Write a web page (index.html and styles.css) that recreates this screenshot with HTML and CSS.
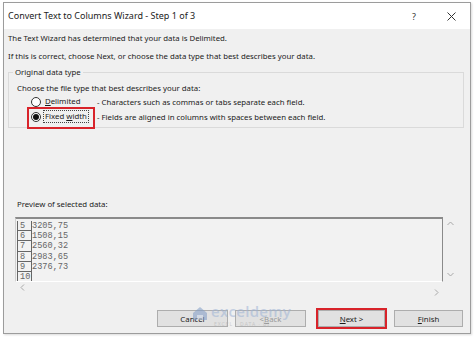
FILE: index.html
```html
<!DOCTYPE html>
<html>
<head>
<meta charset="utf-8">
<link rel="stylesheet" href="styles.css">
</head>
<body>
<div class="dialog">
  <div class="titlebar">
    <span class="title">Convert Text to Columns Wizard - Step 1 of 3</span>
    <span class="help">?</span>
    <svg class="close" width="9" height="9" viewBox="0 0 9 9"><path d="M0.5 0.5L8.5 8.5M8.5 0.5L0.5 8.5" stroke="#333" stroke-width="1"/></svg>
  </div>
  <div class="content">
    <p class="line first">The Text Wizard has determined that your data is Delimited.</p>
    <p class="line second">If this is correct, choose Next, or choose the data type that best describes your data.</p>
    <fieldset class="group">
      <legend>Original data type</legend>
      <p class="line choose">Choose the file type that best describes your data:</p>
      <div class="opt">
        <span class="pick"><span class="radio"></span><span class="lbl"><u>D</u>elimited</span></span>
        <span class="desc">- Characters such as commas or tabs separate each field.</span>
      </div>
      <div class="opt">
        <span class="pick hl"><span class="radio on"></span><span class="lbl focus">Fixed <u>w</u>idth</span></span>
        <span class="desc">- Fields are aligned in columns with spaces between each field.</span>
      </div>
    </fieldset>
    <p class="line plabel">Preview of selected data:</p>
    <div class="preview">
      <div class="box">
        <div class="row"><span class="num">5</span><span class="val">3205,75</span></div>
        <div class="row"><span class="num">6</span><span class="val">1508,15</span></div>
        <div class="row"><span class="num">7</span><span class="val">2560,32</span></div>
        <div class="row"><span class="num">8</span><span class="val">2983,65</span></div>
        <div class="row"><span class="num">9</span><span class="val">2376,73</span></div>
        <div class="row"><span class="num">10</span><span class="val"></span></div>
      </div>
      <div class="vscroll">
        <svg width="7" height="5" viewBox="0 0 7 5"><path d="M0.5 4L3.5 1L6.5 4" fill="none" stroke="#a8a8a8" stroke-width="1"/></svg>
        <svg width="7" height="5" viewBox="0 0 7 5"><path d="M0.5 1L3.5 4L6.5 1" fill="none" stroke="#a8a8a8" stroke-width="1"/></svg>
      </div>
      <div class="hscroll">
        <svg class="hl-left" width="5" height="7" viewBox="0 0 5 7"><path d="M4 0.5L1 3.5L4 6.5" fill="none" stroke="#a8a8a8" stroke-width="1"/></svg>
        <svg class="hl-right" width="5" height="7" viewBox="0 0 5 7"><path d="M1 0.5L4 3.5L1 6.5" fill="none" stroke="#a8a8a8" stroke-width="1"/></svg>
      </div>
    </div>
    <div class="buttons">
      <span class="btn cancel">Cancel</span>
      <span class="btn back">&lt; <u>B</u>ack</span>
      <span class="btn next"><u>N</u>ext &gt;</span>
      <span class="btn finish"><u>F</u>inish</span>
      <div class="watermark">
        <svg class="wm-icon" width="16" height="15" viewBox="0 0 16 15"><path d="M1 7L8 1L15 7V14H1Z" fill="#7f9cc6"/><path d="M5 14V9H11V14" fill="#c9d6ea"/></svg>
        <span class="wm-text">exceldemy</span>
        <span class="wm-sub">EXCEL · DATA · BI</span>
      </div>
    </div>
  </div>
</div>
</body>
</html>
```
FILE: styles.css
```css
* { box-sizing: border-box; }
html, body { margin: 0; padding: 0; background: #fff; }
body {
  width: 474px;
  height: 338px;
  overflow: hidden;
  font-family: "Noto Sans", "Open Sans", sans-serif;
  color: #1b1b1b;
}
.dialog {
  margin: 2px 0 0 3px;
  width: 468px;
  height: 332px;
  border: 1px solid #9c9c9c;
  background: #f0f0f0;
  display: flex;
  flex-direction: column;
  box-shadow: 1px 1px 2px rgba(0,0,0,0.15);
}
.titlebar {
  height: 26px;
  background: #fff;
  display: flex;
  align-items: center;
  padding: 0 0 0 4px;
  flex: none;
}
.title { font-size: 9px; line-height: 12px; color: #222; }
.help { margin-left: auto; font-size: 9px; color: #333; margin-right: 31px; }
.close { margin-right: 14px; }
.content {
  padding: 0 6px 0 4px;
  flex: 1;
  display: flex;
  flex-direction: column;
}
.line { margin: 0; font-size: 7.8px; line-height: 12px; white-space: nowrap; }
.first { margin-top: 3px; }
.second { margin-top: 6px; }
.group {
  margin: 5px 0 0 0;
  padding: 0 0 3px 0;
  border: 1px solid #dadada;
  min-width: 0;
}
.group legend {
  font-size: 7.8px;
  line-height: 10px;
  padding: 0 2px;
  margin-left: 4px;
}
.choose { margin-top: 5px; padding-left: 8px; }
.opt {
  height: 15px;
  display: flex;
  align-items: center;
  font-size: 7.8px;
  padding-left: 22px;
  white-space: nowrap;
}
.pick {
  display: flex;
  align-items: center;
  width: 66px;
  position: relative;
}
.radio {
  width: 10px;
  height: 10px;
  border: 1px solid #333;
  border-radius: 50%;
  background: #fff;
  display: inline-flex;
  align-items: center;
  justify-content: center;
  flex: none;
}
.radio.on::after {
  content: "";
  width: 6px;
  height: 6px;
  border-radius: 50%;
  background: #111;
}
.lbl { margin-left: 4px; line-height: 11px; }
.focus { border: 1px dotted #444; padding: 0 1px; margin-left: 2px; }
.hl::before {
  content: "";
  position: absolute;
  left: -4px;
  top: -3px;
  width: 64px;
  height: 18px;
  border: 2px solid #d8232a;
}
.plabel { margin-top: 70px; padding-left: 9px; }
.preview {
  margin: 7px 0 0 7px;
  display: grid;
  grid-template-columns: 428px 14px;
  grid-template-rows: 65px 13px;
}
.box {
  border-top: 2px solid #8a8a8a;
  border-right: 1px solid #8a8a8a;
  border-bottom: 1px solid #fff;
  border-left: 1px solid #d0d0d0;
  background: #f2f2f2;
  padding: 2px 0 0 1px;
  overflow: hidden;
  font-family: "Liberation Mono", "DejaVu Sans Mono", monospace;
  font-size: 8.6px;
  color: #666;
}
.row { display: flex; height: 10.2px; }
.num {
  width: 15px;
  height: 10.2px;
  border-left: 1px solid #666;
  border-right: 1px solid #666;
  border-bottom: 1px solid #666;
  padding-left: 2px;
  line-height: 11px;
  flex: none;
}
.val { line-height: 11px; padding-left: 0; }
.vscroll {
  grid-row: 1;
  grid-column: 2;
  display: flex;
  flex-direction: column;
  justify-content: space-between;
  align-items: center;
  padding: 4px 0 5px 0;
}
.hscroll {
  grid-row: 2;
  grid-column: 1;
  display: flex;
  justify-content: space-between;
  padding: 0 4px 0 5px;
}
.hl-left { margin-top: 2px; }
.hl-right { margin-top: 7px; }
.buttons {
  margin-top: 15px;
  height: 17px;
  display: flex;
  font-size: 7.8px;
  position: relative;
}
.btn {
  height: 17px;
  background: #e1e1e1;
  border: 1px solid #adadad;
  display: flex;
  align-items: center;
  justify-content: center;
}
.cancel { margin-left: 149px; width: 71px; }
.back { margin-left: 7px; width: 71px; color: #9a9a9a; }
.next { margin-left: 12px; width: 67px; outline: 2px solid #d8232a; outline-offset: 0; }
.finish { margin-left: 9px; width: 69px; }
.watermark {
  position: absolute;
  left: 184px;
  top: -6px;
  width: 110px;
  height: 28px;
  opacity: 0.55;
}
.wm-icon { position: absolute; left: 0; top: 2px; }
.wm-text {
  position: absolute;
  left: 19px;
  top: -3px;
  font-family: "Open Sans", sans-serif;
  font-size: 15px;
  font-weight: 600;
  color: #9fb4d6;
  letter-spacing: 0.3px;
}
.wm-sub {
  position: absolute;
  left: 22px;
  top: 17px;
  font-size: 5px;
  letter-spacing: 1px;
  color: #b0b0b0;
  white-space: nowrap;
}
```
